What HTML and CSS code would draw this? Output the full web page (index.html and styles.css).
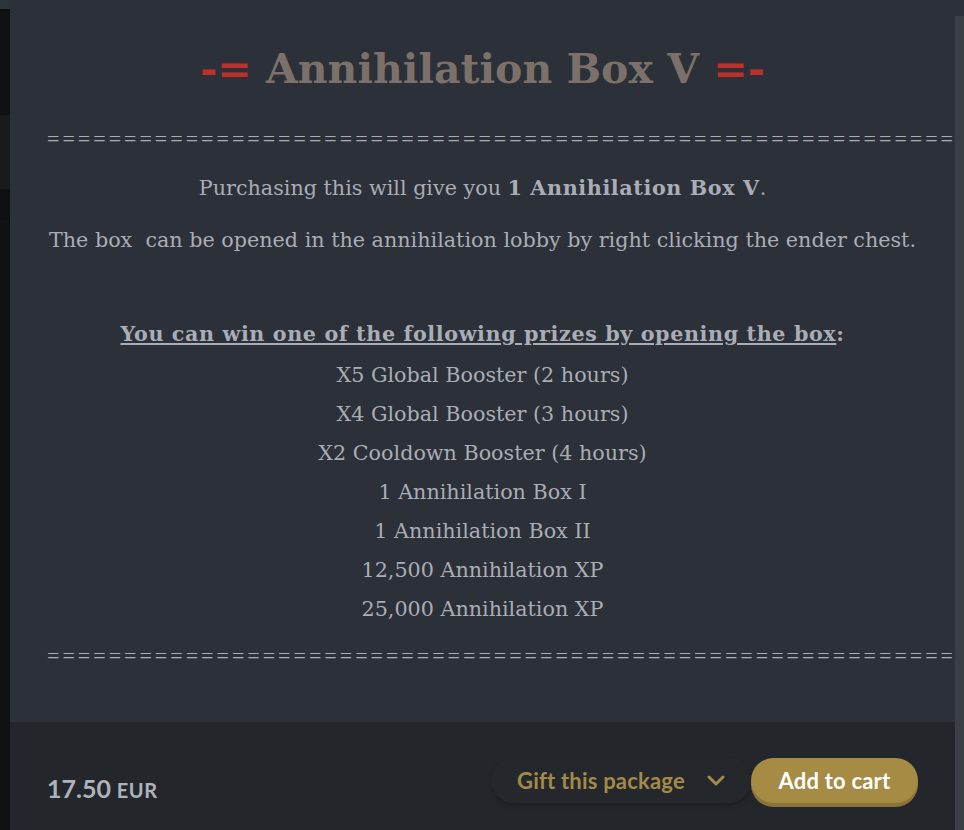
FILE: index.html
```html
<!DOCTYPE html>
<html lang="en">
<head>
<meta charset="utf-8">
<title>Annihilation Box V</title>
<link rel="stylesheet" href="styles.css">
</head>
<body>
<div class="backdrop">
  <div class="bd bd-a"></div>
  <div class="bd bd-b"></div>
  <div class="bd bd-c"></div>
  <div class="bd bd-d"></div>
  <div class="bd bd-e"></div>
</div>
<div class="modal">
  <div class="modal-main">
    <div class="content">
      <h1 class="title"><span class="deco">-=</span> Annihilation Box V <span class="deco">=-</span></h1>
      <div class="rule">============================================================================</div>
      <p class="para para-first">Purchasing this will give you <strong>1 Annihilation Box V</strong>.</p>
      <p class="para">The box&nbsp; can be opened in the annihilation lobby by right clicking the ender chest.</p>
      <p class="para para-prizes"><strong><u>You can win one of the following prizes by opening the box</u>:</strong></p>
      <ul class="prizes">
        <li>X5 Global Booster (2 hours)</li>
        <li>X4 Global Booster (3 hours)</li>
        <li>X2 Cooldown Booster (4 hours)</li>
        <li>1 Annihilation Box I</li>
        <li>1 Annihilation Box II</li>
        <li>12,500 Annihilation XP</li>
        <li>25,000 Annihilation XP</li>
      </ul>
      <div class="rule rule-bottom">============================================================================</div>
    </div>
    <div class="footer">
      <div class="price"><span class="amount">17.50</span> <span class="currency">EUR</span></div>
      <div class="actions">
        <button class="gift" type="button">Gift this package
          <svg class="chev" width="18" height="12" viewBox="0 0 18 12"><path d="M2 2 L9 9 L16 2" fill="none" stroke="currentColor" stroke-width="3" stroke-linecap="round" stroke-linejoin="round"/></svg>
        </button>
        <button class="cart" type="button">Add to cart</button>
      </div>
    </div>
  </div>
  <div class="scroll"></div>
</div>
</body>
</html>
```
FILE: styles.css
```css
html, body {
  margin: 0;
  padding: 0;
}
body {
  display: flex;
  height: 830px;
  overflow: hidden;
  background: #0e1214;
  font-family: "DejaVu Serif", Georgia, serif;
}
.backdrop {
  width: 10px;
  display: flex;
  flex-direction: column;
  flex-shrink: 0;
}
.bd-a { height: 9px; background: #2c3439; }
.bd-b { height: 106px; background: #0f1113; }
.bd-c { height: 74px; background: #181b1e; }
.bd-d { height: 31px; background: #0d0f11; }
.bd-e { flex: 1; background: #0e1214; }

.modal {
  flex: 1;
  display: flex;
  background: #2c3038;
  min-width: 0;
}
.modal-main {
  flex: 1;
  display: flex;
  flex-direction: column;
  min-width: 0;
  overflow: hidden;
}
.scroll {
  width: 9px;
  margin-top: 16px;
  background: #3a3f46;
  flex-shrink: 0;
}
.content {
  flex: 1;
  padding: 0 37px;
  text-align: center;
  color: #a9adb5;
  font-size: 20.7px;
}
.title {
  margin: 41px 0 0;
  font-size: 41px;
  line-height: 56px;
  font-weight: bold;
  color: #7b706a;
  white-space: nowrap;
}
.deco {
  color: #c0302a;
}
.rule {
  margin-top: 29px;
  white-space: nowrap;
  text-align: left;
  font-family: "Liberation Serif", serif;
  font-size: 22px;
  letter-spacing: 3px;
  line-height: 26px;
  color: #a9adb5;
}
.para {
  margin: 0;
  line-height: 28px;
  white-space: nowrap;
}
.para-first {
  margin-top: 22px;
}
.para + .para {
  margin-top: 24px;
}
.para.para-prizes {
  margin-top: 66px;
}
.para strong {
  font-weight: bold;
  letter-spacing: 0.6px;
}
.prizes {
  list-style: none;
  margin: 8px 0 0;
  padding: 0;
}
.prizes li {
  line-height: 39px;
}
.rule-bottom {
  margin-top: 14px;
}

.footer {
  height: 108px;
  box-sizing: border-box;
  flex-shrink: 0;
  background: #23272b;
  display: flex;
  align-items: center;
  justify-content: space-between;
  padding: 9px 37px 0;
  font-family: Lato, "Open Sans", sans-serif;
}
.price {
  color: #aeb2bb;
  font-weight: bold;
  padding-top: 15px;
}
.amount {
  font-size: 25px;
}
.currency {
  font-size: 20px;
  margin-left: 2px;
  letter-spacing: 0.5px;
}
.actions {
  display: flex;
  align-items: center;
  gap: 0;
}
.gift, .cart {
  font-family: Lato, "Open Sans", sans-serif;
  font-weight: bold;
  font-size: 22px;
  letter-spacing: 0.2px;
  border: none;
  border-radius: 24px;
  height: 45px;
  cursor: pointer;
}
.gift {
  width: 260px;
  background: #24282c;
  color: #a38a48;
  box-shadow: 0 3px 4px rgba(0, 0, 0, 0.22);
  display: flex;
  align-items: center;
  justify-content: center;
  gap: 22px;
  padding: 0;
}
.chev {
  display: block;
}
.cart {
  width: 167px;
  background: #a68b45;
  color: #ffffff;
  box-shadow: 0 4px 0 #8b7439;
}
```
